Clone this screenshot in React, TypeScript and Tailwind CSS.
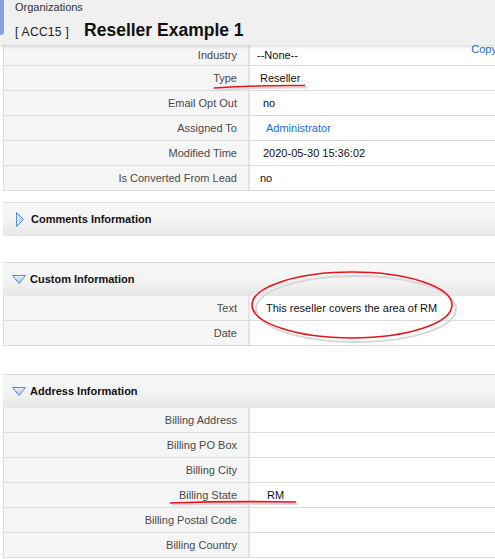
type Row = { label: string; value?: string; link?: boolean; pad?: string };

const topRows: Row[] = [
  { label: 'Type', value: 'Reseller', pad: 'pl-[10px]' },
  { label: 'Email Opt Out', value: 'no', pad: 'pl-[13px]' },
  { label: 'Assigned To', value: 'Administrator', link: true, pad: 'pl-[16px]' },
  { label: 'Modified Time', value: '2020-05-30 15:36:02', pad: 'pl-[13px]' },
  { label: 'Is Converted From Lead', value: 'no', pad: 'pl-[10px]' },
];

const customRows: Row[] = [
  { label: 'Text', value: 'This reseller covers the area of RM', pad: 'pl-[16px]' },
  { label: 'Date' },
];

const addressRows: Row[] = [
  { label: 'Billing Address' },
  { label: 'Billing PO Box' },
  { label: 'Billing City' },
  { label: 'Billing State', value: 'RM', pad: 'pl-[17px]' },
  { label: 'Billing Postal Code' },
  { label: 'Billing Country' },
];

function FieldRow({ row }: { row: Row }) {
  return (
    <div className="flex h-[25px] border-b border-[#dcdcdc]">
      <div className="w-[246px] bg-[#f5f5f5] border-r-2 border-[#e4e4e4] flex items-center justify-end pr-[11px] text-[11px] text-[#4a4a4a]">
        {row.label}
      </div>
      <div
        className={`flex-1 bg-white flex items-center text-[11px] ${row.pad ?? 'pl-[10px]'} ${
          row.link ? 'text-[#1a6fd0]' : 'text-[#111]'
        }`}
      >
        {row.value}
      </div>
    </div>
  );
}

function SectionHead({ title, open }: { title: string; open: boolean }) {
  return (
    <div
      className={`h-[34px] border-t border-[#dedede] bg-gradient-to-b from-[#f7f7f7] via-[#f4f4f4] to-[#e6e6e6] flex items-center ${
        open ? 'pl-[9px] gap-[4px]' : 'pl-[13px] gap-[7px]'
      }`}
    >
      {open ? (
        <svg width="14" height="9" viewBox="0 0 14 9">
          <defs>
            <linearGradient id="gdown" x1="0" y1="0" x2="0" y2="1">
              <stop offset="0" stopColor="#e8f2ff" />
              <stop offset="1" stopColor="#9cc4f0" />
            </linearGradient>
          </defs>
          <path d="M0.5 0.5 L13.5 0.5 L7 8.5 Z" fill="url(#gdown)" stroke="#4a8fe0" strokeWidth="1" />
        </svg>
      ) : (
        <svg width="8" height="15" viewBox="0 0 8 15">
          <defs>
            <linearGradient id="gright" x1="0" y1="0" x2="1" y2="0">
              <stop offset="0" stopColor="#e8f2ff" />
              <stop offset="1" stopColor="#9cc4f0" />
            </linearGradient>
          </defs>
          <path d="M0.5 0.5 L7.5 7.5 L0.5 14.5 Z" fill="url(#gright)" stroke="#4a8fe0" strokeWidth="1" />
        </svg>
      )}
      <span className="text-[11px] font-bold text-[#111]">{title}</span>
    </div>
  );
}

export default function App() {
  return (
    <div className="relative w-[495px] h-[559px] overflow-hidden bg-white font-['Liberation_Sans',Arial,sans-serif]">
      {/* Header */}
      <div className="relative z-10 h-[45px] bg-[#f0f0f0] shadow-[0_2px_3px_rgba(0,0,0,0.12)] flex">
        <div className="w-[4px] h-[35px] bg-[#8c9ee6] rounded-br-[3px]" />
        <div className="pl-[11px] pt-[1px]">
          <div className="text-[11px] text-[#333] leading-[13px]">Organizations</div>
          <div className="flex items-baseline mt-[3px]">
            <span className="text-[12px] text-[#222] tracking-[0.3px]">[ ACC15 ]</span>
            <span className="ml-[15px] text-[17.5px] font-bold text-[#111]">Reseller Example 1</span>
          </div>
        </div>
      </div>

      {/* Top field block */}
      <div className="ml-[3px] border-l border-[#dcdcdc]">
        <div className="relative flex h-[21px] border-b border-[#dcdcdc]">
          <div className="w-[246px] bg-[#f5f5f5] border-r-2 border-[#e4e4e4] flex items-center justify-end pr-[11px] text-[11px] text-[#4a4a4a]">
            Industry
          </div>
          <div className="flex-1 bg-white flex items-center pl-[7px] text-[11px] text-[#111]">--None--</div>
          <span className="absolute right-[-2px] top-[-4px] text-[11px] text-[#1a6fd0]">Copy</span>
        </div>
        {topRows.map((r) => (
          <FieldRow key={r.label} row={r} />
        ))}
      </div>

      {/* Comments */}
      <div className="mt-[11px] ml-[3px]">
        <SectionHead title="Comments Information" open={false} />
      </div>

      {/* Custom */}
      <div className="mt-[26px] ml-[3px]">
        <SectionHead title="Custom Information" open />
        <div className="border-l border-[#dcdcdc]">
          {customRows.map((r) => (
            <FieldRow key={r.label} row={r} />
          ))}
        </div>
      </div>

      {/* Address */}
      <div className="mt-[28px] ml-[3px]">
        <SectionHead title="Address Information" open />
        <div className="border-l border-[#dcdcdc]">
          {addressRows.map((r) => (
            <FieldRow key={r.label} row={r} />
          ))}
        </div>
      </div>

      {/* red annotations */}
      <svg className="absolute inset-0 pointer-events-none z-20" width="495" height="559" viewBox="0 0 495 559">
        <path d="M214 88 Q 258 85 305 85.5" stroke="#d8d8d8" strokeWidth="2" fill="none" transform="translate(2 2)" />
        <path d="M214 88 Q 258 85 305 85.5" stroke="#e8141b" strokeWidth="1.6" fill="none" />
        <ellipse cx="354" cy="307" rx="100" ry="33" stroke="#d8d8d8" strokeWidth="2" fill="none" transform="translate(2 2)" />
        <ellipse cx="352" cy="305" rx="100" ry="33" stroke="#e8141b" strokeWidth="1.6" fill="none" />
        <path d="M170 503 Q 230 501 296 502" stroke="#d8d8d8" strokeWidth="2" fill="none" transform="translate(2 2)" />
        <path d="M170 503 Q 230 501 296 502" stroke="#e8141b" strokeWidth="1.6" fill="none" />
      </svg>
    </div>
  );
}
